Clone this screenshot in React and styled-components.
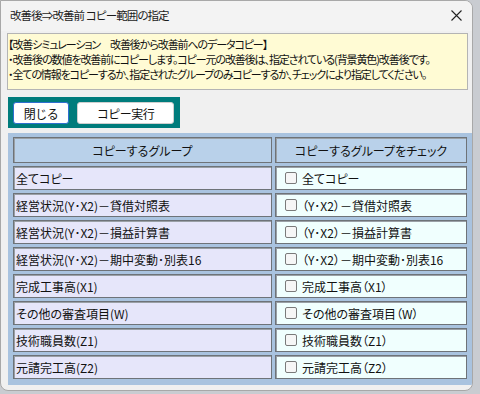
import React, { useState } from "react";
import styled, { createGlobalStyle } from "styled-components";

const GlobalStyle = createGlobalStyle`
  html, body {
    margin: 0;
    padding: 0;
    background: #c9ccd1;
  }
  body {
    font-family: "Noto Sans CJK JP", "Noto Sans", sans-serif;
    font-feature-settings: "palt";
  }
`;

const groups = [
  { name: "全てコピー", label: "全てコピー" },
  { name: "経営状況(Y･X2)－貸借対照表", label: "（Y･X2）－貸借対照表" },
  { name: "経営状況(Y･X2)－損益計算書", label: "（Y･X2）－損益計算書" },
  { name: "経営状況(Y･X2)－期中変動･別表16", label: "（Y･X2）－期中変動･別表16" },
  { name: "完成工事高(X1)", label: "完成工事高（X1）" },
  { name: "その他の審査項目(W)", label: "その他の審査項目（W）" },
  { name: "技術職員数(Z1)", label: "技術職員数（Z1）" },
  { name: "元請完工高(Z2)", label: "元請完工高（Z2）" },
];

function App() {
  const [checked, setChecked] = useState(groups.map(() => false));

  const toggle = (i) => {
    const next = [...checked];
    next[i] = !next[i];
    setChecked(next);
  };

  return (
    <>
      <GlobalStyle />
      <Window>
        <TitleBar>
          <Title>改善後⇒改善前 コピー範囲の指定</Title>
          <CloseBtn aria-label="close">
            <svg width="11" height="11" viewBox="0 0 11 11">
              <path d="M0.5 0.5 L10.5 10.5 M10.5 0.5 L0.5 10.5" stroke="#222" strokeWidth="1.1" />
            </svg>
          </CloseBtn>
        </TitleBar>
        <Body>
          <InfoBox>
            <p>【改善シミュレーション　改善後から改善前へのデータコピー】</p>
            <p>・改善後の数値を改善前にコピーします。コピー元の改善後は、指定されている(背景黄色)改善後です。</p>
            <p>・全ての情報をコピーするか、指定されたグループのみコピーするか、チェックにより指定してください。</p>
          </InfoBox>
          <ButtonBar>
            <Button $focused $w={56}>閉じる</Button>
            <Button $w={97}>コピー実行</Button>
          </ButtonBar>
          <Table>
            <HeadCell>コピーするグループ</HeadCell>
            <HeadCell>コピーするグループをチェック</HeadCell>
            {groups.map((g, i) => (
              <React.Fragment key={g.name}>
                <NameCell>{g.name}</NameCell>
                <CheckCell onClick={() => toggle(i)}>
                  <Box $on={checked[i]}>{checked[i] ? "✓" : ""}</Box>
                  <span>{g.label}</span>
                </CheckCell>
              </React.Fragment>
            ))}
          </Table>
        </Body>
      </Window>
    </>
  );
}

const Window = styled.div`
  width: 473px;
  height: 391px;
  background: #f0f0f0;
  border: 1px solid #a8a8a8;
  border-radius: 0 8px 8px 8px;
  display: flex;
  flex-direction: column;
  overflow: hidden;
  box-sizing: border-box;
`;

const TitleBar = styled.div`
  height: 30px;
  display: flex;
  align-items: center;
  justify-content: space-between;
  padding: 0 9px 0 9px;
  background: #f3f3f3;
`;

const Title = styled.div`
  font-size: 11.5px;
  letter-spacing: -0.9px;
  color: #1b1b1b;
  margin-top: -2px;
`;

const CloseBtn = styled.div`
  width: 14px;
  height: 14px;
  display: flex;
  align-items: center;
  justify-content: center;
  margin-top: -2px;
`;

const Body = styled.div`
  padding: 2px 0 0 6px;
  display: flex;
  flex-direction: column;
  align-items: flex-start;
`;

const InfoBox = styled.div`
  width: 461px;
  height: 57px;
  box-sizing: border-box;
  background: #fffbd4;
  border: 1px solid #b4b4b4;
  padding: 3px 0 0 0;
  font-size: 11px;
  letter-spacing: -1.1px;
  line-height: 15px;
  color: #111;
  overflow: hidden;

  p {
    margin: 0;
    white-space: nowrap;
  }
`;

const ButtonBar = styled.div`
  margin-top: 7px;
  margin-left: 1px;
  width: 172px;
  height: 31px;
  box-sizing: border-box;
  background: #007c7c;
  padding: 5px 6px 0 5px;
  display: flex;
  gap: 8px;
  align-items: flex-start;
`;

const Button = styled.button`
  width: ${(p) => p.$w}px;
  height: 22px;
  box-sizing: border-box;
  background: #fff;
  border: 1px solid ${(p) => (p.$focused ? "#2f6fd0" : "#cfcfcf")};
  border-radius: 3px;
  font-family: inherit;
  font-size: 12px;
  letter-spacing: -0.5px;
  color: #111;
  padding: 0;
  cursor: pointer;
`;

const Table = styled.div`
  margin-top: 5px;
  margin-left: 1px;
  width: 465px;
  box-sizing: border-box;
  background: #a9c3df;
  padding: 4px 4px 6px 5px;
  display: grid;
  grid-template-columns: 259px 192px;
  column-gap: 3px;
  row-gap: 3px;
  grid-template-rows: 26px repeat(8, 24px);
`;

const Cell = styled.div`
  box-sizing: border-box;
  border: 1px solid #6e7378;
  box-shadow: inset 1px 1px 0 #9aa0a6;
  display: flex;
  align-items: center;
  font-size: 12px;
  color: #111;
  white-space: nowrap;
`;

const HeadCell = styled(Cell)`
  background: #b9d1ea;
  justify-content: center;
`;

const NameCell = styled(Cell)`
  background: #e6e6fa;
  padding-left: 2px;
`;

const CheckCell = styled(Cell)`
  background: #f0fffe;
  padding-left: 9px;
  gap: 5px;
  cursor: pointer;
`;

const Box = styled.span`
  width: 12px;
  height: 12px;
  box-sizing: border-box;
  border: 1px solid #7a7a7a;
  border-radius: 2px;
  background: ${(p) => (p.$on ? "#2f6fd0" : "#f6f6f6")};
  color: #fff;
  font-size: 10px;
  line-height: 10px;
  text-align: center;
`;

export default App;
